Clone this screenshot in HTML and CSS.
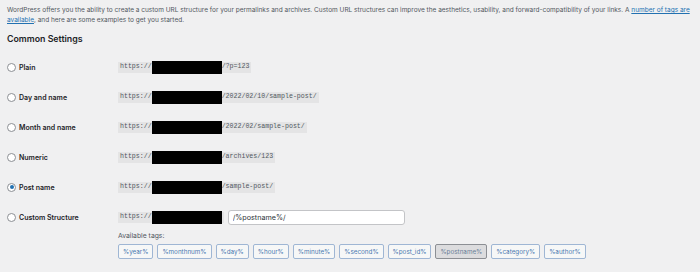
FILE: index.html
```html
<!doctype html>
<html lang="en">
    <head>
        <meta charset="UTF-8" />
        <title>Permalink Settings</title>
        <link rel="stylesheet" href="styles.css">
    </head>
    <body>
        <div class="wrap">
            <p class="intro">
                WordPress offers you the ability to create a custom URL structure for your permalinks and archives. Custom URL structures can improve the aesthetics, usability, and forward-compatibility of your links. A <a href="#">number of tags are available</a>, and here are some examples to get you started.
            </p>

            <h2>Common Settings</h2>

            <div class="options">
                <div class="row">
                    <label class="choice"><input type="radio" name="permalink" /> Plain</label>
                    <div><code>https://<span class="redact"></span>/?p=123</code></div>
                </div>
                <div class="row">
                    <label class="choice"><input type="radio" name="permalink" /> Day and name</label>
                    <div><code>https://<span class="redact"></span>/2022/02/10/sample-post/</code></div>
                </div>
                <div class="row">
                    <label class="choice"><input type="radio" name="permalink" /> Month and name</label>
                    <div><code>https://<span class="redact"></span>/2022/02/sample-post/</code></div>
                </div>
                <div class="row">
                    <label class="choice"><input type="radio" name="permalink" /> Numeric</label>
                    <div><code>https://<span class="redact"></span>/archives/123</code></div>
                </div>
                <div class="row">
                    <label class="choice"><input type="radio" name="permalink" checked /> Post name</label>
                    <div><code>https://<span class="redact"></span>/sample-post/</code></div>
                </div>
                <div class="row custom">
                    <label class="choice"><input type="radio" name="permalink" /> Custom Structure</label>
                    <div class="custom-field">
                        <code>https://<span class="redact"></span></code>
                        <input type="text" class="structure" value="/%postname%/" />
                    </div>
                </div>
                <div class="tags-row">
                    <div class="tags-label">Available tags:</div>
                    <ul class="tags">
                        <li><button>%year%</button></li>
                        <li><button>%monthnum%</button></li>
                        <li><button>%day%</button></li>
                        <li><button>%hour%</button></li>
                        <li><button>%minute%</button></li>
                        <li><button>%second%</button></li>
                        <li><button>%post_id%</button></li>
                        <li><button class="active">%postname%</button></li>
                        <li><button>%category%</button></li>
                        <li><button>%author%</button></li>
                    </ul>
                </div>
            </div>
        </div>
    </body>
</html>
```

FILE: styles.css
```css
* {
    margin: 0;
    padding: 0;
    box-sizing: border-box;
}

body {
    font-family: Inter, "Noto Sans", sans-serif;
    background: #f0f0f1;
    color: #3c434a;
    font-size: 7px;
}

.wrap {
    padding: 5px 8px 0 7px;
}

.intro {
    font-size: 6.5px;
    line-height: 10px;
    color: #50575e;
}

.intro a {
    color: #2271b1;
}

h2 {
    font-size: 8.8px;
    font-weight: 600;
    color: #1d2327;
    margin-top: 7px;
    line-height: 13px;
}

.options {
    margin-top: 7px;
}

.row {
    display: grid;
    grid-template-columns: 111px 1fr;
    align-items: center;
    height: 30px;
}

.choice {
    display: flex;
    align-items: center;
    gap: 3px;
    font-weight: 600;
    color: #1d2327;
    font-size: 7px;
}

.choice input {
    appearance: none;
    width: 9px;
    height: 9px;
    border: 1px solid #8c8f94;
    border-radius: 50%;
    background: #fff;
    display: grid;
    place-items: center;
}

.choice input:checked::before {
    content: "";
    width: 4px;
    height: 4px;
    border-radius: 50%;
    background: #2271b1;
}

code {
    font-family: "Liberation Mono", monospace;
    font-size: 6.6px;
    background: #e4e4e5;
    color: #50575e;
    padding: 2px 2px;
    line-height: 6px;
    display: inline-flex;
    align-items: center;
}

.redact {
    display: inline-block;
    width: 70px;
    height: 13px;
    background: #000;
    margin: -3px 0;
}

.custom-field {
    display: flex;
    align-items: center;
    gap: 4px;
}

.structure {
    width: 177px;
    height: 15px;
    border: 1px solid #c3c4c7;
    border-radius: 3px;
    background: #fff;
    font-family: Inter, "Noto Sans", sans-serif;
    font-size: 7.2px;
    color: #2c3338;
    padding: 0 4px;
}

.tags-row {
    padding-left: 111px;
    margin-top: -1px;
}

.tags-label {
    color: #50575e;
    line-height: 10px;
    font-size: 6.8px;
}

.tags {
    list-style: none;
    display: flex;
    gap: 4px;
    margin-top: 3px;
}

.tags button {
    font-family: Inter, "Noto Sans", sans-serif;
    font-size: 6.3px;
    color: #4a78b0;
    background: #f6f7f7;
    border: 1px solid #9fb6d4;
    border-radius: 2px;
    height: 15px;
    padding: 0 4px;
}

.tags button.active {
    background: #dcdcde;
    border-color: #8c8f94;
    color: #6a7e98;
}
```
